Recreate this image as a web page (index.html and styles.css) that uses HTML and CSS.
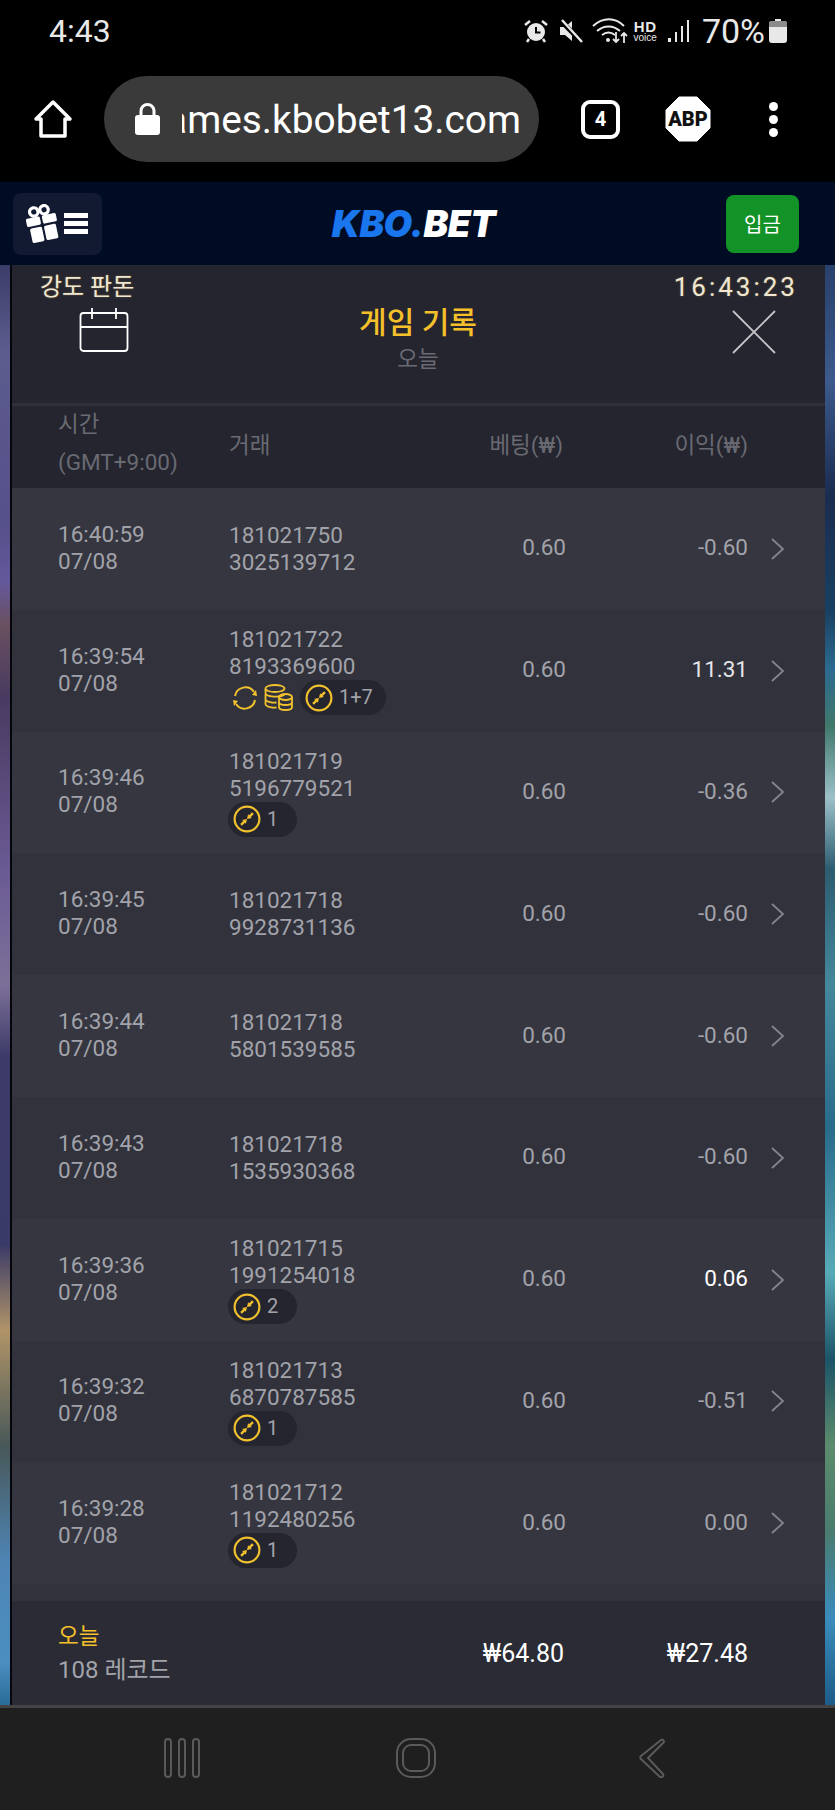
FILE: index.html
```html
<!DOCTYPE html>
<html lang="ko">

<head>
    <title>KBO.BET 게임 기록</title>
    <meta charset="UTF-8">
    <link rel="stylesheet" href="styles.css">
</head>

<body>
    <svg class="defs" width="0" height="0">
        <symbol id="i-free" viewBox="0 0 26 26">
            <circle cx="13" cy="13" r="11.500" fill="none" stroke="#f2c12e" stroke-width="2" />
            <path d="M7.500 18.500l3-3M18.500 7.500l-3 3" stroke="#f2c12e" stroke-width="2.200" />
            <path d="M14 8.500l3.500 3.500-4.500 1zM12 17.500l-3.500-3.500 4.500-1z" fill="#f2c12e" />
        </symbol>
        <symbol id="i-chev" viewBox="0 0 16 24">
            <path d="M2 2l11 10-11 10" fill="none" stroke="#84858c" stroke-width="1.800" />
        </symbol>
    </svg>

    <!-- phone status bar -->
    <div class="status">
        <span class="clock">4:43</span>
        <div class="status-right">
            <svg class="alarm" width="24" height="24" viewBox="0 0 24 24">
                <circle cx="12" cy="13" r="9" fill="#e8e8e8" />
                <path d="M12 8v5.500h4.500" fill="none" stroke="#000" stroke-width="2" />
                <path d="M1 6l5-4M23 6l-5-4M5 20l-2 3M19 20l2 3" stroke="#e8e8e8" stroke-width="2.500" />
            </svg>
            <svg class="mute" width="24" height="24" viewBox="0 0 24 24">
                <path d="M1 8h5l7-6v20l-7-6H1z" fill="#e8e8e8" />
                <path d="M2 2l21 21" stroke="#000" stroke-width="5" />
                <path d="M3 1l20 22" stroke="#e8e8e8" stroke-width="2.500" />
            </svg>
            <svg class="wifi" width="36" height="26" viewBox="0 0 36 26">
                <path d="M1 8c10-9 22-9 31 0M5 13c7-6 16-6 23 0M10 17c4-3 9-3 13 0" fill="none" stroke="#e8e8e8" stroke-width="2" />
                <circle cx="16" cy="22" r="2" fill="#e8e8e8" />
                <path d="M24 14v10m-3-3l3 3 3-3M32 25V15m-3 3l3-3 3 3" fill="none" stroke="#e8e8e8" stroke-width="1.800" />
            </svg>
            <div class="hd"><b>HD</b><span>voice</span></div>
            <svg class="signal" width="24" height="24" viewBox="0 0 24 24">
                <path d="M2 19h3v4H2zM9 13h2v10H9zM15 7h2v16h-2zM21 1h2v22h-2z" fill="#e8e8e8" />
            </svg>
            <span class="pct">70%</span>
            <svg class="battery" width="18" height="24" viewBox="0 0 18 24">
                <path d="M6 0h6v2h3a3 3 0 0 1 3 3v16a3 3 0 0 1-3 3H3a3 3 0 0 1-3-3V5a3 3 0 0 1 3-3h3z" fill="#e8e8e8" />
                <path d="M0 5a3 3 0 0 1 3-3h12a3 3 0 0 1 3 3v3H0z" fill="#8b8b8b" />
            </svg>
        </div>
    </div>

    <!-- browser toolbar -->
    <div class="toolbar">
        <svg class="home" width="40" height="40" viewBox="0 0 40 40">
            <path d="M20 3L37 20h-5v17H8V20H3z" fill="none" stroke="#fff" stroke-width="3.500" stroke-linejoin="round" />
        </svg>
        <div class="urlbar">
            <svg class="lock" width="25" height="32" viewBox="0 0 25 32">
                <path d="M6 13V8a6.500 6.500 0 0 1 13 0v5" fill="none" stroke="#fff" stroke-width="3" />
                <rect x="0" y="12" width="25" height="20" rx="3" fill="#fff" />
            </svg>
            <div class="url"><span>games.kbobet13.com</span></div>
        </div>
        <div class="tabs">4</div>
        <svg class="abp" width="46" height="46" viewBox="0 0 46 46">
            <path d="M14 1h18l13 13v18L32 45H14L1 32V14z" fill="#fff" stroke="#fff" stroke-width="1" stroke-linejoin="round" />
            <text x="23" y="30" text-anchor="middle" class="abp-text">ABP</text>
        </svg>
        <div class="dots"><i></i><i></i><i></i></div>
    </div>

    <!-- site header -->
    <header class="site-head">
        <button class="menu-btn" type="button">
            <svg width="36" height="40" viewBox="0 0 34 38">
                <g transform="rotate(-12 17 20)" fill="#fff">
                    <rect x="2" y="11" width="13.500" height="8" rx="1.500" />
                    <rect x="17.500" y="11" width="13.500" height="8" rx="1.500" />
                    <rect x="4" y="21" width="11.500" height="14" rx="1.500" />
                    <rect x="17.500" y="21" width="11.500" height="14" rx="1.500" />
                    <circle cx="11" cy="6" r="4" fill="none" stroke="#fff" stroke-width="3" />
                    <circle cx="21" cy="6" r="4" fill="none" stroke="#fff" stroke-width="3" />
                </g>
            </svg>
            <span class="burger"><i></i><i></i><i></i></span>
        </button>
        <div class="logo"><span class="logo-a">KBO.</span><span>BET</span></div>
        <button class="deposit" type="button">입금</button>
    </header>

    <main class="stage">
        <div class="strip strip-l"></div>
        <section class="panel">
            <div class="panel-top">
                <span class="vol">강도 판돈</span>
                <span class="timer">16:43:23</span>
            </div>
            <div class="panel-head">
                <svg class="cal" width="50" height="46" viewBox="0 0 50 46">
                    <rect x="1.500" y="6" width="47" height="38" rx="3" fill="none" stroke="#fff" stroke-width="1.800" />
                    <path d="M1.500 20h47M13 1v11M37 1v11" stroke="#fff" stroke-width="1.800" />
                </svg>
                <div class="head-title">
                    <h1>게임 기록</h1>
                    <p>오늘</p>
                </div>
                <svg class="close" width="44" height="44" viewBox="0 0 44 44">
                    <path d="M1 1l42 42M43 1L1 43" stroke="#c4c4c6" stroke-width="1.800" />
                </svg>
            </div>

            <div class="cols">
                <div class="c-time">시간<br>(GMT+9:00)</div>
                <div class="c-tx">거래</div>
                <div class="c-num">베팅(₩)</div>
                <div class="c-num c-profit">이익(₩)</div>
            </div>

            <div class="list">
                <div class="row">
                    <div class="c-time">16:40:59<br>07/08</div>
                    <div class="c-tx">181021750<br>3025139712</div>
                    <div class="c-num c-bet">0.60</div>
                    <div class="c-num c-profit">-0.60</div>
                    <svg class="chev"><use href="#i-chev" /></svg>
                </div>
                <div class="row">
                    <div class="c-time">16:39:54<br>07/08</div>
                    <div class="c-tx">181021722<br>8193369600
                        <div class="tags">
                            <svg class="t-icon" width="28" height="28" viewBox="0 0 28 28">
                                <path d="M4 12A10.500 10.500 0 0 1 23 8M24 16A10.500 10.500 0 0 1 5 20" fill="none" stroke="#f2c12e" stroke-width="2" />
                                <path d="M26 12l-5-1 4-5zM2 16l5 1-4 5z" fill="#f2c12e" />
                            </svg>
                            <svg class="t-icon" width="30" height="28" viewBox="0 0 30 28">
                                <g fill="none" stroke="#f2c12e" stroke-width="1.800">
                                    <ellipse cx="11" cy="4.500" rx="9.500" ry="3.500" />
                                    <path d="M1.500 5v4c0 4 15 5 19 1.500M1.500 10v5c0 3 8 4 11 3.500M1.500 15v5c0 3 8 4 11 3.500" />
                                    <ellipse cx="21.500" cy="13" rx="6.500" ry="3" />
                                    <path d="M15 13v10c0 4 13 4 13 0V13M15 18c0 4 13 4 13 0" />
                                </g>
                            </svg>
                            <span class="pill pill-wide"><svg width="28" height="28"><use href="#i-free" /></svg>1+7</span>
                        </div>
                    </div>
                    <div class="c-num c-bet">0.60</div>
                    <div class="c-num c-profit win">11.31</div>
                    <svg class="chev"><use href="#i-chev" /></svg>
                </div>
                <div class="row">
                    <div class="c-time">16:39:46<br>07/08</div>
                    <div class="c-tx">181021719<br>5196779521
                        <div class="tags tags-flush"><span class="pill"><svg width="28" height="28"><use href="#i-free" /></svg>1</span></div>
                    </div>
                    <div class="c-num c-bet">0.60</div>
                    <div class="c-num c-profit">-0.36</div>
                    <svg class="chev"><use href="#i-chev" /></svg>
                </div>
                <div class="row">
                    <div class="c-time">16:39:45<br>07/08</div>
                    <div class="c-tx">181021718<br>9928731136</div>
                    <div class="c-num c-bet">0.60</div>
                    <div class="c-num c-profit">-0.60</div>
                    <svg class="chev"><use href="#i-chev" /></svg>
                </div>
                <div class="row">
                    <div class="c-time">16:39:44<br>07/08</div>
                    <div class="c-tx">181021718<br>5801539585</div>
                    <div class="c-num c-bet">0.60</div>
                    <div class="c-num c-profit">-0.60</div>
                    <svg class="chev"><use href="#i-chev" /></svg>
                </div>
                <div class="row">
                    <div class="c-time">16:39:43<br>07/08</div>
                    <div class="c-tx">181021718<br>1535930368</div>
                    <div class="c-num c-bet">0.60</div>
                    <div class="c-num c-profit">-0.60</div>
                    <svg class="chev"><use href="#i-chev" /></svg>
                </div>
                <div class="row">
                    <div class="c-time">16:39:36<br>07/08</div>
                    <div class="c-tx">181021715<br>1991254018
                        <div class="tags tags-flush"><span class="pill"><svg width="28" height="28"><use href="#i-free" /></svg>2</span></div>
                    </div>
                    <div class="c-num c-bet">0.60</div>
                    <div class="c-num c-profit bright">0.06</div>
                    <svg class="chev"><use href="#i-chev" /></svg>
                </div>
                <div class="row">
                    <div class="c-time">16:39:32<br>07/08</div>
                    <div class="c-tx">181021713<br>6870787585
                        <div class="tags tags-flush"><span class="pill"><svg width="28" height="28"><use href="#i-free" /></svg>1</span></div>
                    </div>
                    <div class="c-num c-bet">0.60</div>
                    <div class="c-num c-profit">-0.51</div>
                    <svg class="chev"><use href="#i-chev" /></svg>
                </div>
                <div class="row">
                    <div class="c-time">16:39:28<br>07/08</div>
                    <div class="c-tx">181021712<br>1192480256
                        <div class="tags tags-flush"><span class="pill"><svg width="28" height="28"><use href="#i-free" /></svg>1</span></div>
                    </div>
                    <div class="c-num c-bet">0.60</div>
                    <div class="c-num c-profit">0.00</div>
                    <svg class="chev"><use href="#i-chev" /></svg>
                </div>
            </div>

            <div class="totals">
                <div class="t-label"><b>오늘</b><br><span>108 레코드</span></div>
                <div class="c-num t-val t-bet">₩64.80</div>
                <div class="c-num c-profit t-val">₩27.48</div>
            </div>
        </section>
        <div class="strip strip-r"></div>
    </main>

    <!-- android nav bar -->
    <nav class="navbar">
        <svg class="nav-recent" width="36" height="40" viewBox="0 0 36 40">
            <g fill="none" stroke="#5a5a5a" stroke-width="2">
                <rect x="1" y="1" width="6" height="38" rx="3" />
                <rect x="15" y="1" width="6" height="38" rx="3" />
                <rect x="29" y="1" width="6" height="38" rx="3" />
            </g>
        </svg>
        <svg class="nav-home" width="40" height="40" viewBox="0 0 40 40">
            <g fill="none" stroke="#5a5a5a" stroke-width="2">
                <rect x="1" y="1" width="38" height="38" rx="14" />
                <rect x="7" y="7" width="26" height="26" rx="8" />
            </g>
        </svg>
        <svg class="nav-back" width="26" height="40" viewBox="0 0 26 40">
            <path d="M22 2c1-1 3 0 3 2L9 20l15 16c1 2-1 4-3 3L2 21c-1-1-1-2 0-3z" fill="none" stroke="#5a5a5a" stroke-width="2" />
        </svg>
    </nav>
</body>

</html>
```

FILE: styles.css
```css
body {
    font-family: Roboto, "Noto Sans CJK KR", sans-serif;
    margin: 0;
    width: 835px;
    height: 1810px;
    display: flex;
    flex-direction: column;
    background-color: #000;
    overflow: hidden;
}

.defs {
    display: none;
}

/* status bar */
.status {
    height: 60px;
    flex: none;
    display: flex;
    align-items: center;
    justify-content: space-between;
    box-sizing: border-box;
    padding: 2px 48px 0 49px;
    color: #e8e8e8;
}

.clock {
    font-size: 32px;
}

.status-right {
    display: flex;
    align-items: center;
}

.alarm {
    margin-right: 11px;
}

.mute {
    margin-right: 9px;
}

.wifi {
    margin-right: 6px;
}

.hd {
    display: flex;
    flex-direction: column;
    align-items: center;
    line-height: 1;
    margin-right: 9px;
}

.hd b {
    font-family: "Liberation Sans", sans-serif;
    font-size: 15px;
    letter-spacing: 0.5px;
}

.hd span {
    font-family: "Liberation Sans", sans-serif;
    font-size: 10px;
    margin-top: -1px;
}

.signal {
    margin-right: 12px;
}

.pct {
    font-size: 34px;
    margin-right: 4px;
}

/* browser toolbar */
.toolbar {
    height: 122px;
    flex: none;
    display: flex;
    align-items: center;
    box-sizing: border-box;
    padding: 0 0 4px 33px;
}

.urlbar {
    width: 435px;
    height: 86px;
    margin-left: 31px;
    border-radius: 43px;
    background-color: #3a3a3a;
    display: flex;
    align-items: center;
    box-sizing: border-box;
    padding: 0 18px 0 31px;
}

.lock {
    flex: none;
}

.url {
    flex: 1;
    margin-left: 22px;
    overflow: hidden;
    display: flex;
    justify-content: flex-end;
    white-space: nowrap;
    color: #fff;
    font-size: 38.800px;
}

.tabs {
    width: 39px;
    height: 39px;
    box-sizing: border-box;
    margin-left: 42px;
    border: 4px solid #fff;
    border-radius: 9px;
    color: #fff;
    font-size: 20px;
    font-weight: 700;
    display: flex;
    align-items: center;
    justify-content: center;
}

.abp {
    margin-left: 45px;
}

.abp-text {
    font-family: Roboto, sans-serif;
    font-size: 20px;
    font-weight: 900;
    fill: #111;
}

.dots {
    margin-left: 58px;
    display: flex;
    flex-direction: column;
    gap: 4px;
}

.dots i {
    display: block;
    width: 9px;
    height: 9px;
    border-radius: 50%;
    background-color: #fff;
}

/* site header */
.site-head {
    height: 83px;
    flex: none;
    display: flex;
    align-items: center;
    justify-content: space-between;
    box-sizing: border-box;
    padding: 0 36px 0 13px;
    background-color: #000c24;
}

.menu-btn {
    width: 89px;
    height: 62px;
    border: none;
    border-radius: 8px;
    background-color: #111a30;
    display: flex;
    align-items: center;
    gap: 3px;
    padding: 0 0 0 12px;
}

.burger {
    display: flex;
    flex-direction: column;
    gap: 3px;
}

.burger i {
    display: block;
    width: 24px;
    height: 5px;
    background-color: #fff;
}

.logo {
    font-family: Inter, sans-serif;
    font-size: 37px;
    font-weight: 900;
    font-style: italic;
    color: #fff;
    letter-spacing: -0.500px;
    margin-left: -1px;
}

.logo-a {
    color: #1a76ec;
}

.deposit {
    width: 73px;
    height: 58px;
    border: none;
    border-radius: 8px;
    background-color: #129227;
    color: #fff;
    font-family: "Noto Sans CJK KR", sans-serif;
    font-size: 20px;
}

/* stage with blurred game background */
.stage {
    flex: 1;
    display: flex;
    min-height: 0;
}

.strip {
    flex: none;
}

.strip-l {
    width: 10px;
    border-right: 2px solid #05060c;
    background: linear-gradient(#3c3c68 0, #5c5c8e 6%, #56508a 18%, #64589c 22%, #6a5060 25%, #483a60 30%, #6a5a94 42%, #7c7098 50%, #3c3a68 55%, #3a3a68 68%, #b09468 74%, #485858 82%, #4e84b4 90%, #4a8fc0 97%, #2a6c98 100%);
}

.strip-r {
    width: 10px;
    background: linear-gradient(#28406c 0, #3c5a8c 8%, #1a2c50 16%, #184060 24%, #2c6a90 28%, #40786c 32%, #9cc0c8 37%, #2c5c70 42%, #44889c 50%, #286c8c 60%, #58aab8 70%, #1c5468 76%, #5c8c6c 82%, #4a7c70 88%, #3a8cbc 94%, #1c5c88 100%);
}

.panel {
    flex: 1;
    min-width: 0;
    display: flex;
    flex-direction: column;
    background-color: #24252f;
    color: #a2a3aa;
    font-size: 22.500px;
    line-height: 27px;
}

.panel-top {
    height: 36px;
    flex: none;
    display: flex;
    align-items: flex-end;
    justify-content: space-between;
    padding: 0 28px;
    color: #efe7d4;
    text-shadow: 0 0 2px #7a6238;
}

.vol {
    font-size: 24px;
}

.timer {
    font-size: 26px;
    letter-spacing: 3px;
    margin-right: -1px;
}

.panel-head {
    height: 105px;
    flex: none;
    display: grid;
    grid-template-columns: 1fr auto 1fr;
    align-items: start;
    box-sizing: border-box;
    padding: 0 49px 0 67px;
    border-bottom: 3px solid #2f3039;
}

.cal {
    margin-top: 6px;
}

.close {
    justify-self: end;
    margin-top: 9px;
}

.head-title {
    text-align: center;
    margin-top: 2px;
    margin-right: 19px;
}

.head-title h1 {
    margin: 0;
    font-size: 30px;
    line-height: 40px;
    font-weight: 500;
    color: #f5c02a;
}

.head-title p {
    margin: 0;
    line-height: 32px;
    font-size: 22.500px;
    color: #696a72;
}

/* table columns */
.cols,
.row,
.totals {
    display: grid;
    grid-template-columns: 171px 1fr 165px 185px 77px;
    align-items: center;
    padding-left: 46px;
}

.cols {
    height: 82px;
    flex: none;
    color: #696a72;
}

.cols .c-time {
    line-height: 38px;
    margin-top: -9px;
}

.cols .c-tx {
    margin-top: -3px;
}

.cols .c-num {
    margin-top: -3px;
}

.c-num {
    text-align: right;
}

.list {
    flex: none;
    height: 1113px;
    background-color: #31323c;
}

.row {
    height: 121.800px;
    background-color: #31323c;
}

.row:nth-child(odd) {
    background-color: #35363f;
}

.row .c-time,
.row .c-num {
    margin-top: -2px;
}

.c-bet {
    margin-right: -3px;
}

.win {
    color: #e6e6e8;
}

.bright {
    color: #fff;
}

.chev {
    width: 16px;
    height: 24px;
    margin-left: 22px;
}

.tags {
    display: flex;
    align-items: center;
    height: 35px;
    margin-top: 0;
    margin-left: 2px;
}

.tags-flush {
    margin-left: -1px;
}

.t-icon {
    margin-right: 5px;
}

.pill {
    display: flex;
    align-items: center;
    gap: 6px;
    height: 35px;
    box-sizing: border-box;
    padding: 0 19px 0 5px;
    border-radius: 18px;
    background-color: #24252f;
    font-size: 20px;
}

.pill-wide {
    padding-right: 13px;
    margin-left: 1px;
}

/* totals */
.totals {
    flex: 1;
    background-color: #2a2b35;
}

.t-label {
    grid-column: 1 / 3;
    line-height: 34px;
}

.t-label b {
    color: #f5c02a;
    font-weight: 400;
}

.t-label span {
    font-size: 24px;
}

.t-val {
    color: #fff;
    font-size: 25px;
}

.t-bet {
    margin-right: -1px;
}

/* android nav bar */
.navbar {
    height: 105px;
    flex: none;
    box-sizing: border-box;
    border-top: 3px solid #444;
    background-color: #1f1f1f;
    display: flex;
    align-items: center;
    padding: 0 0 2px 164px;
}

.nav-home {
    margin-left: 196px;
}

.nav-back {
    margin-left: 203px;
}
```
